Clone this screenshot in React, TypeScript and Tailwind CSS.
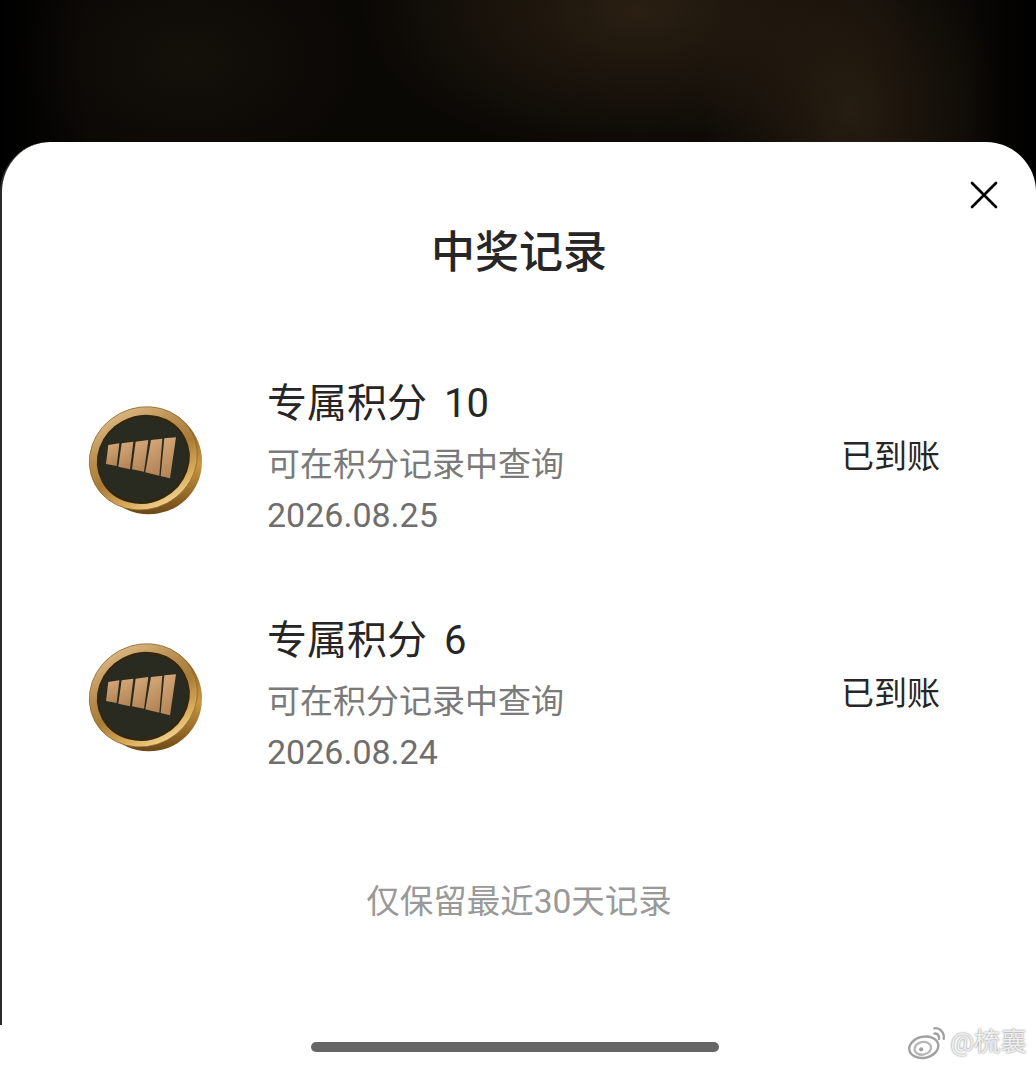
import { useId } from 'react'
import { X } from 'lucide-react'

const records = [
  { name: '专属积分 10', date: '2026.08.25' },
  { name: '专属积分 6', date: '2026.08.24' },
]

const bars = [
  '115,165 148,160 140,228 108,222',
  '155,160 190,155 180,238 145,230',
  '197,155 235,150 222,245 186,238',
  '243,150 277,146 268,257 226,247',
  '283,145 318,142 300,265 272,258',
]

function Coin() {
  const id = useId()
  return (
    <svg width="150" height="140" viewBox="0 0 450 420" className="shrink-0" aria-hidden>
      <defs>
        <linearGradient id={`${id}rim`} x1="0.5" y1="0" x2="0.5" y2="1">
          <stop offset="0" stopColor="#d8b47e" />
          <stop offset="0.3" stopColor="#b98e50" />
          <stop offset="0.55" stopColor="#a87c36" />
          <stop offset="0.85" stopColor="#dcae5e" />
          <stop offset="1" stopColor="#efcf8c" />
        </linearGradient>
        <linearGradient id={`${id}side`} x1="0.3" y1="0" x2="0.9" y2="1">
          <stop offset="0" stopColor="#6d4a1a" />
          <stop offset="0.45" stopColor="#c9983f" />
          <stop offset="0.75" stopColor="#8b5f22" />
          <stop offset="1" stopColor="#4f3210" />
        </linearGradient>
        <linearGradient id={`${id}bar`} x1="0" y1="0" x2="0.3" y2="1">
          <stop offset="0" stopColor="#d9ab7c" />
          <stop offset="1" stopColor="#b58657" />
        </linearGradient>
      </defs>
      <ellipse cx="234" cy="212" rx="163" ry="160" transform="rotate(35 234 212)" fill={`url(#${id}side)`} />
      <ellipse cx="220" cy="205" rx="165" ry="152" transform="rotate(-28 220 205)" fill={`url(#${id}rim)`} stroke="#8a6428" strokeWidth="2" />
      <ellipse cx="220" cy="208" rx="138" ry="128" transform="rotate(-28 220 208)" fill="#2a2b20" stroke="#33260f" strokeWidth="7" />
      {bars.map((points) => (
        <polygon key={points} points={points} fill={`url(#${id}bar)`} />
      ))}
    </svg>
  )
}

function WeiboMark() {
  return (
    <svg width="42" height="38" viewBox="0 0 40 36" fill="none" aria-hidden>
      <ellipse cx="16" cy="23" rx="14" ry="10" transform="rotate(-12 16 23)" stroke="#a0a0a0" strokeWidth="2.200" fill="#fff" />
      <ellipse cx="15" cy="24" rx="8" ry="6" transform="rotate(-12 15 24)" stroke="#b5b5b5" strokeWidth="2.200" />
      <circle cx="13.500" cy="25" r="2" fill="#a0a0a0" />
      <path d="M26 5c5-1 10 4 9 10" stroke="#a0a0a0" strokeWidth="2.200" strokeLinecap="round" />
      <path d="M26 10c2.500-.5 5 1.500 4.500 5" stroke="#a0a0a0" strokeWidth="2.200" strokeLinecap="round" />
    </svg>
  )
}

export default function App() {
  return (
    <div className="relative flex h-[1068px] w-[1036px] flex-col overflow-hidden bg-white font-['Roboto','Noto_Sans_CJK_SC',sans-serif]">
      {/* page behind the sheet */}
      <div className="absolute inset-x-0 top-0 h-[1025px] bg-[#0a0805] bg-[radial-gradient(ellipse_280px_150px_at_640px_10px,#2a1f12,transparent),radial-gradient(ellipse_150px_190px_at_850px_110px,#271d11,transparent),radial-gradient(ellipse_170px_120px_at_190px_60px,#14100a,transparent),linear-gradient(90deg,#000,transparent_90px),linear-gradient(270deg,#000,transparent_70px)]" />

      <div className="h-[142px] shrink-0" />

      <div className="relative flex h-[883px] flex-col rounded-t-[50px] border-l-2 border-[#2b2b2b] bg-white">
        <button className="absolute right-[28px] top-[29px] text-black">
          <X size={48} strokeWidth={1.300} />
        </button>

        <h1 className="mt-[82px] text-center text-[44px] leading-[58px] font-medium text-[#262626]">中奖记录</h1>

        <ul className="mt-[93px] flex flex-col gap-[68px] pl-[68px] pr-[96px]">
          {records.map((r) => (
            <li key={r.date} className="flex h-[169px] items-center">
              <Coin />
              <div className="ml-[47px] flex flex-1 flex-col">
                <span className="text-[40px] leading-[50px] text-[#262626] [word-spacing:7px]">{r.name}</span>
                <span className="mt-[11px] text-[33px] leading-[50px] text-[#7a7a7a]">可在积分记录中查询</span>
                <span className="mt-[-1px] text-[34px] leading-[52px] text-[#6e6e6e]">{r.date}</span>
              </div>
              <span className="mb-[6px] text-[33px] leading-[44px] text-[#262626]">已到账</span>
            </li>
          ))}
        </ul>

        <p className="mt-[98px] text-center text-[33.500px] leading-[46px] text-[#999]">仅保留最近30天记录</p>
      </div>

      <div className="relative flex flex-1 justify-center">
        <div className="mt-[17px] mr-[6px] h-[10px] w-[408px] rounded-full bg-[#666]" />
        <div className="absolute right-[9px] top-[-2px] flex items-center gap-[1px]">
          <WeiboMark />
          <span className="text-[26.500px] leading-[36px] text-[#eeeeee] [text-shadow:0_0_2px_#777]">@梳襄</span>
        </div>
      </div>
    </div>
  )
}
